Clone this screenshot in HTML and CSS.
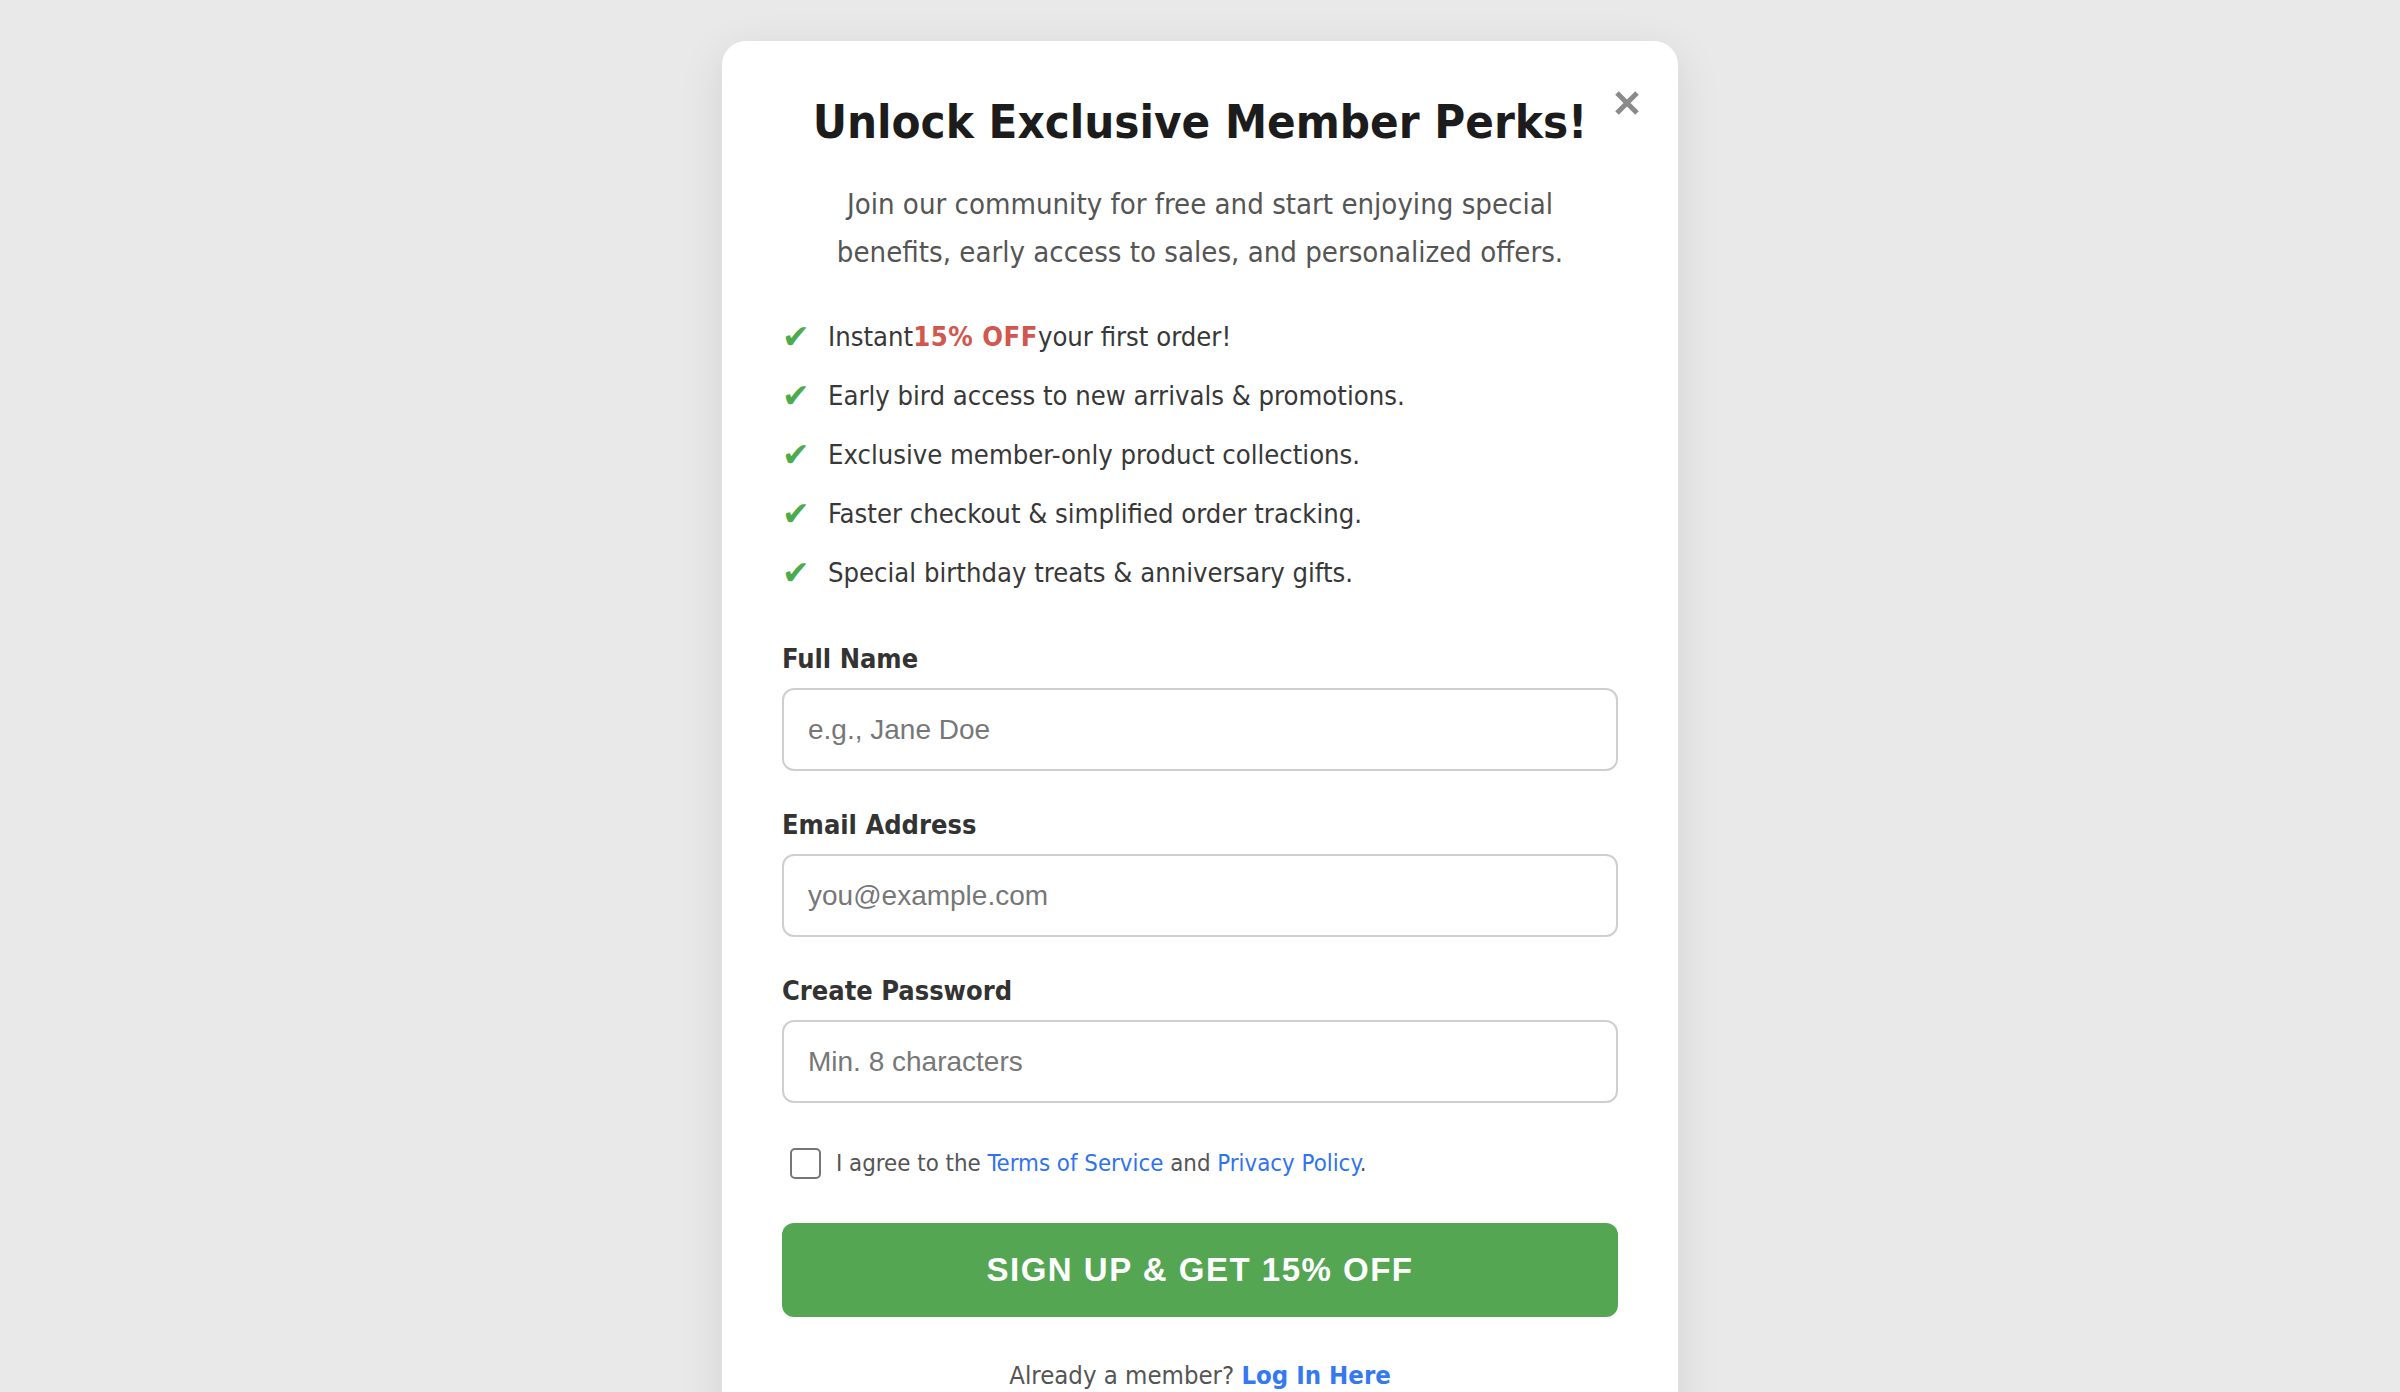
FILE: index.html
```html
<!DOCTYPE html>
<html lang="en">
<head>
<meta charset="utf-8">
<title>Unlock Exclusive Member Perks</title>
<link rel="stylesheet" href="styles.css">
</head>
<body>
<div class="modal">
  <button class="close" aria-label="Close">
    <svg viewBox="0 0 26 26" width="26" height="26"><path d="M3 3 L23 23 M23 3 L3 23" stroke="#8a8a8a" stroke-width="5" fill="none"/></svg>
  </button>
  <h1 class="title">Unlock Exclusive Member Perks!</h1>
  <p class="intro">Join our community for free and start enjoying special benefits, early access to sales, and personalized offers.</p>
  <ul class="perks">
    <li><span class="check">✔</span><span>Instant<strong class="hot">15% OFF</strong>your first order!</span></li>
    <li><span class="check">✔</span><span>Early bird access to new arrivals &amp; promotions.</span></li>
    <li><span class="check">✔</span><span>Exclusive member-only product collections.</span></li>
    <li><span class="check">✔</span><span>Faster checkout &amp; simplified order tracking.</span></li>
    <li><span class="check">✔</span><span>Special birthday treats &amp; anniversary gifts.</span></li>
  </ul>
  <form class="form">
    <div class="field">
      <label class="label" for="name">Full Name</label>
      <input class="input" id="name" type="text" placeholder="e.g., Jane Doe">
    </div>
    <div class="field">
      <label class="label" for="email">Email Address</label>
      <input class="input" id="email" type="email" placeholder="you@example.com">
    </div>
    <div class="field field-last">
      <label class="label" for="pw">Create Password</label>
      <input class="input" id="pw" type="password" placeholder="Min. 8 characters">
    </div>
    <div class="agree">
      <input class="box" type="checkbox" id="agree">
      <label for="agree">I agree to the <a href="#">Terms of Service</a> and <a href="#">Privacy Policy</a>.</label>
    </div>
    <button class="submit" type="button">SIGN UP &amp; GET 15% OFF</button>
    <p class="login">Already a member? <a href="#">Log In Here</a></p>
  </form>
</div>
</body>
</html>
```

FILE: styles.css
```css
html, body {
  margin: 0;
  padding: 0;
}
body {
  background: #e9e9e9;
  font-family: "DejaVu Sans Condensed", "DejaVu Sans", sans-serif;
  padding-top: 41px;
  min-height: 1392px;
  box-sizing: border-box;
}
.modal {
  position: relative;
  width: 956px;
  margin: 0 auto;
  box-sizing: border-box;
  background: #fff;
  border-radius: 24px;
  padding: 53px 60px 40px;
  box-shadow: 0 12px 45px rgba(0, 0, 0, 0.1);
}
.close {
  position: absolute;
  top: 49px;
  right: 38px;
  width: 26px;
  height: 26px;
  padding: 0;
  border: 0;
  background: none;
  display: flex;
}
.title {
  margin: 0;
  text-align: center;
  font-size: 47px;
  line-height: 56px;
  font-weight: bold;
  color: #1c1c1c;
}
.intro {
  margin: 30px 0 0;
  text-align: center;
  font-size: 29.1px;
  line-height: 48px;
  color: #555;
  padding: 0 30px;
}
.perks {
  list-style: none;
  margin: 42px 0 0;
  padding: 0;
  display: flex;
  flex-direction: column;
  gap: 21px;
}
.perks li {
  display: flex;
  align-items: center;
  gap: 16px;
  font-size: 27.2px;
  line-height: 38px;
  color: #383838;
}
.check {
  font-family: "DejaVu Sans", sans-serif;
  color: #4cab4c;
  font-size: 33px;
  width: 30px;
  line-height: 38px;
}
.hot {
  color: #d2574e;
  font-weight: bold;
  letter-spacing: 0.5px;
}
.form {
  margin-top: 51px;
}
.field {
  display: flex;
  flex-direction: column;
  margin-bottom: 38px;
}
.field-last {
  margin-bottom: 44px;
}
.label {
  font-size: 27px;
  line-height: 32px;
  font-weight: bold;
  color: #333;
  margin-bottom: 13px;
}
.input {
  height: 83px;
  box-sizing: border-box;
  border: 2px solid #cfcfcf;
  border-radius: 12px;
  padding: 0 24px;
  font-family: "Liberation Sans", Arial, sans-serif;
  font-size: 28px;
  color: #333;
  outline: none;
}
.input::placeholder {
  color: #777;
}
.agree {
  display: flex;
  align-items: center;
  gap: 15px;
  padding-left: 8px;
  font-size: 23.8px;
  line-height: 32px;
  color: #555;
}
.box {
  appearance: none;
  -webkit-appearance: none;
  margin: 0;
  width: 31px;
  height: 31px;
  border: 2px solid #767676;
  border-radius: 5px;
  box-sizing: border-box;
  background: #fff;
}
.agree a {
  color: #2f73ef;
  text-decoration: none;
}
.submit {
  display: block;
  width: 100%;
  height: 94px;
  margin-top: 44px;
  border: 0;
  border-radius: 12px;
  background: #54a653;
  color: #fff;
  font-family: "Liberation Sans", Arial, sans-serif;
  font-weight: bold;
  font-size: 33px;
  letter-spacing: 1.5px;
}
.login {
  margin: 42px 0 0;
  text-align: center;
  font-size: 25.5px;
  line-height: 32px;
  color: #555;
}
.login a {
  color: #3479f0;
  font-weight: bold;
  text-decoration: none;
}
```
